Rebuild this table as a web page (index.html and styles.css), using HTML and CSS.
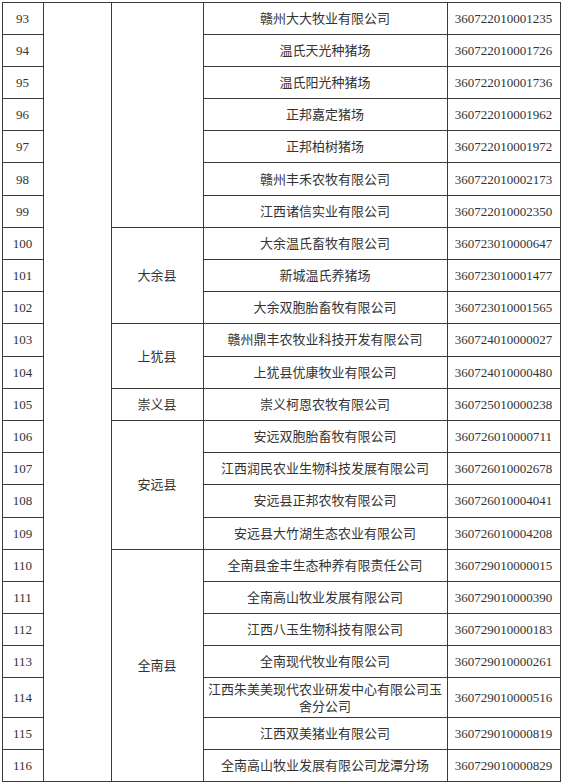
FILE: index.html
```html
<!DOCTYPE html>
<html lang="zh-CN">
<head>
<meta charset="utf-8">
<title>表</title>
<link rel="stylesheet" href="styles.css">
</head>
<body>
<table class="list">
  <colgroup>
    <col class="c-no">
    <col class="c-city">
    <col class="c-county">
    <col class="c-name">
    <col class="c-code">
  </colgroup>
  <tbody>
    <tr><td>93</td><td rowspan="24"></td><td rowspan="7"></td><td>赣州大大牧业有限公司</td><td>360722010001235</td></tr>
    <tr><td>94</td><td>温氏天光种猪场</td><td>360722010001726</td></tr>
    <tr><td>95</td><td>温氏阳光种猪场</td><td>360722010001736</td></tr>
    <tr><td>96</td><td>正邦嘉定猪场</td><td>360722010001962</td></tr>
    <tr><td>97</td><td>正邦柏树猪场</td><td>360722010001972</td></tr>
    <tr><td>98</td><td>赣州丰禾农牧有限公司</td><td>360722010002173</td></tr>
    <tr><td>99</td><td>江西诸信实业有限公司</td><td>360722010002350</td></tr>
    <tr><td>100</td><td rowspan="3">大余县</td><td>大余温氏畜牧有限公司</td><td>360723010000647</td></tr>
    <tr><td>101</td><td>新城温氏养猪场</td><td>360723010001477</td></tr>
    <tr><td>102</td><td>大余双胞胎畜牧有限公司</td><td>360723010001565</td></tr>
    <tr><td>103</td><td rowspan="2">上犹县</td><td>赣州鼎丰农牧业科技开发有限公司</td><td>360724010000027</td></tr>
    <tr><td>104</td><td>上犹县优康牧业有限公司</td><td>360724010000480</td></tr>
    <tr><td>105</td><td>崇义县</td><td>崇义柯恩农牧有限公司</td><td>360725010000238</td></tr>
    <tr><td>106</td><td rowspan="4">安远县</td><td>安远双胞胎畜牧有限公司</td><td>360726010000711</td></tr>
    <tr><td>107</td><td>江西润民农业生物科技发展有限公司</td><td>360726010002678</td></tr>
    <tr><td>108</td><td>安远县正邦农牧有限公司</td><td>360726010004041</td></tr>
    <tr><td>109</td><td>安远县大竹湖生态农业有限公司</td><td>360726010004208</td></tr>
    <tr><td>110</td><td rowspan="7">全南县</td><td>全南县金丰生态种养有限责任公司</td><td>360729010000015</td></tr>
    <tr><td>111</td><td>全南高山牧业发展有限公司</td><td>360729010000390</td></tr>
    <tr><td>112</td><td>江西八玉生物科技有限公司</td><td>360729010000183</td></tr>
    <tr><td>113</td><td>全南现代牧业有限公司</td><td>360729010000261</td></tr>
    <tr class="tall"><td>114</td><td>江西朱美美现代农业研发中心有限公司玉舍分公司</td><td>360729010000516</td></tr>
    <tr><td>115</td><td>江西双美猪业有限公司</td><td>360729010000819</td></tr>
    <tr><td>116</td><td>全南高山牧业发展有限公司龙潭分场</td><td>360729010000829</td></tr>
  </tbody>
</table>
</body>
</html>
```

FILE: styles.css
```css
html, body {
  margin: 0;
  padding: 0;
  background: #ffffff;
}

body {
  padding: 1.5px 0 0 1.5px;
}

.list {
  border-collapse: collapse;
  table-layout: fixed;
  width: 559px;
  font-family: "Liberation Serif", "Noto Sans CJK SC", serif;
  font-size: 13px;
  color: #333333;
}

.c-no { width: 41px; }
.c-city { width: 68px; }
.c-county { width: 92px; }
.c-name { width: 244px; }
.c-code { width: 113px; }

.list td {
  border: 1px solid #3a3a3a;
  text-align: center;
  vertical-align: middle;
  padding: 0 4px;
  line-height: 17px;
  height: 31px;
  box-sizing: border-box;
}

.list tr {
  height: 32.2px;
}

.list tr.tall {
  height: 39.4px;
}
```
